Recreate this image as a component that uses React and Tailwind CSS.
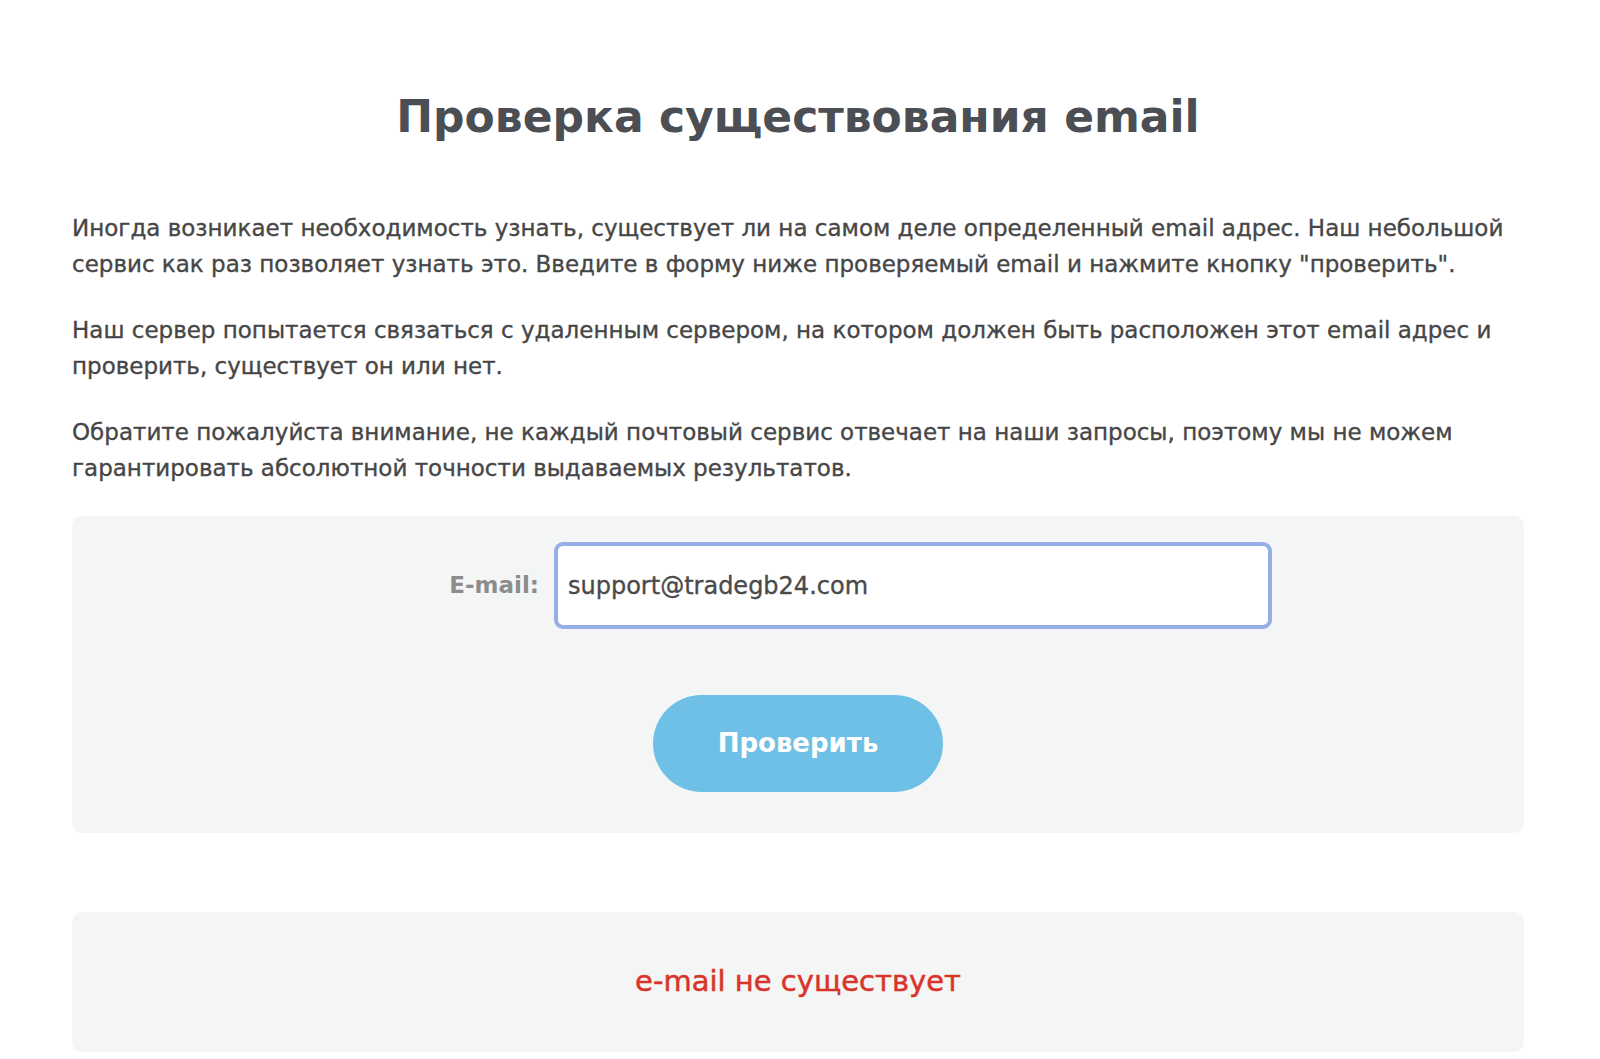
export default function App() {
  return (
    <div className="min-h-screen bg-white font-['DejaVu_Sans',_'Open_Sans',_sans-serif]">
      <div className="ml-[72px] w-[1452px] pt-[86px] pb-[7px]">
        {/* Title */}
        <h1 className="text-center text-[44px] leading-[62px] font-bold text-[#4b4e53]">
          Проверка существования email
        </h1>

        {/* Description */}
        <div className="mt-[62px] flex flex-col gap-[30px] text-[23px] leading-[36px] text-[#464646] whitespace-nowrap [-webkit-text-stroke:0.35px_currentColor]">
          <p>
            Иногда возникает необходимость узнать, существует ли на самом деле определенный email адрес. Наш небольшой
            <br />
            сервис как раз позволяет узнать это. Введите в форму ниже проверяемый email и нажмите кнопку "проверить".
          </p>
          <p>
            Наш сервер попытается связаться с удаленным сервером, на котором должен быть расположен этот email адрес и
            <br />
            проверить, существует он или нет.
          </p>
          <p>
            Обратите пожалуйста внимание, не каждый почтовый сервис отвечает на наши запросы, поэтому мы не можем
            <br />
            гарантировать абсолютной точности выдаваемых результатов.
          </p>
        </div>

        {/* Form */}
        <div className="mt-[30px] rounded-[10px] bg-[#f4f5f5] pt-[26px] pb-[41px]">
          <div className="flex items-center">
            <div className="w-[482px] flex justify-end pr-[15px]">
              <label className="text-[23px] font-bold text-[#8c8c8c]">E-mail:</label>
            </div>
            <div className="w-[718px] h-[87px] rounded-[9px] border-[4px] border-[#94aee6] bg-white flex items-center px-[10px]">
              <span className="text-[24px] text-[#4a4a4a] [-webkit-text-stroke:0.35px_currentColor]">support@tradegb24.com</span>
            </div>
          </div>
          <div className="flex justify-center">
            <button className="mt-[66px] w-[290px] h-[97px] rounded-full bg-[#6ec0e6] text-white text-[26px] font-bold">
              Проверить
            </button>
          </div>
        </div>

        {/* Result */}
        <div className="mt-[79px] h-[140px] rounded-[10px] bg-[#f4f5f5] flex items-center justify-center">
          <span className="text-[29px] text-[#d9342a] [-webkit-text-stroke:0.5px_currentColor]">e-mail не существует</span>
        </div>
      </div>
    </div>
  );
}
